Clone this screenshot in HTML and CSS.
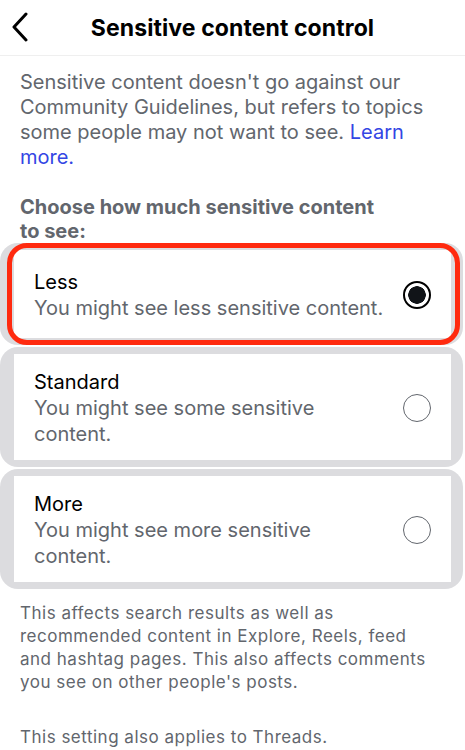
FILE: index.html
```html
<!DOCTYPE html>
<html lang="en">
<head>
    <meta charset="UTF-8">
    <meta name="viewport" content="width=device-width, initial-scale=1.0">
    <title>Sensitive content control</title>
    <link rel="stylesheet" href="styles.css">
</head>
<body>
    <header class="topbar">
        <button class="back" type="button" aria-label="Back">
            <svg width="20" height="30" viewBox="0 0 20 30">
                <path d="M16 2 L4 15 L16 28" fill="none" stroke="#000" stroke-width="3" stroke-linecap="round" stroke-linejoin="round"/>
            </svg>
        </button>
        <h1 class="title">Sensitive content control</h1>
    </header>

    <main class="content">
        <p class="intro">Sensitive content doesn't go against our Community Guidelines, but refers to topics some people may not want to see. <a href="#">Learn more.</a></p>

        <h2 class="question">Choose how much sensitive content to see:</h2>

        <div class="options">
            <label class="option option-marked">
                <div class="option-body">
                    <div class="option-text">
                        <div class="option-name">Less</div>
                        <div class="option-desc">You might see less sensitive content.</div>
                    </div>
                    <span class="radio radio-on"></span>
                </div>
            </label>
            <label class="option">
                <div class="option-body">
                    <div class="option-text">
                        <div class="option-name">Standard</div>
                        <div class="option-desc">You might see some sensitive content.</div>
                    </div>
                    <span class="radio"></span>
                </div>
            </label>
            <label class="option">
                <div class="option-body">
                    <div class="option-text">
                        <div class="option-name">More</div>
                        <div class="option-desc">You might see more sensitive content.</div>
                    </div>
                    <span class="radio"></span>
                </div>
            </label>
        </div>

        <p class="note">This affects search results as well as recommended content in Explore, Reels, feed and hashtag pages. This also affects comments you see on other people's posts.</p>
        <p class="note note-last">This setting also applies to Threads.</p>
    </main>
</body>
</html>
```

FILE: styles.css
```css
body {
    margin: 0;
    background-color: #fff;
    color: #000;
    font-family: Inter, "Noto Sans", sans-serif;
}
.topbar {
    position: relative;
    height: 55px;
    display: flex;
    align-items: center;
    justify-content: center;
    border-bottom: 1px solid #efefef;
}
.back {
    position: absolute;
    left: 10px;
    top: 12px;
    padding: 0;
    border: none;
    background: none;
}
.title {
    margin: 0;
    font-size: 23px;
    font-weight: 700;
    letter-spacing: 0.1px;
}
.content {
    padding-top: 14px;
}
.intro {
    margin: 0 20px;
    font-size: 20px;
    line-height: 25px;
    color: #62666d;
}
.intro a {
    color: #3346e4;
    text-decoration: none;
}
.question {
    max-width: 370px;
    margin: 25px 20px 0;
    font-size: 20px;
    line-height: 24px;
    font-weight: 700;
    color: #62666d;
}
.options {
    margin-top: 0;
    display: flex;
    flex-direction: column;
    gap: 2px;
}
.option {
    position: relative;
    display: block;
    margin-right: 2px;
    padding: 7px 12px 7px 14px;
    background-color: #dcdcdf;
    border-radius: 18px;
}
.option-marked::after {
    content: "";
    position: absolute;
    left: 7px;
    right: 3px;
    top: 0;
    bottom: 0;
    border: 5px solid #ff2a0f;
    border-radius: 20px;
}
.option-body {
    min-height: 88px;
    box-sizing: border-box;
    display: flex;
    align-items: center;
    gap: 12px;
    padding: 15px 20px 13px;
    background-color: #fff;
}
.option-text {
    flex: 1;
}
.option-name {
    font-size: 20px;
    line-height: 26px;
}
.option-desc {
    font-size: 20px;
    line-height: 26px;
    color: #62666d;
}
.radio {
    width: 28px;
    height: 28px;
    box-sizing: border-box;
    border: 1.5px solid #62666d;
    border-radius: 50%;
    flex-shrink: 0;
}
.radio-on {
    border: 2.5px solid #000;
    background: radial-gradient(circle, #111418 0 8.5px, transparent 9px);
}
.note {
    margin: 13px 30px 0 20px;
    font-size: 17px;
    line-height: 23px;
    letter-spacing: 0.5px;
    color: #62666d;
}
.note-last {
    margin-top: 32px;
}
```
